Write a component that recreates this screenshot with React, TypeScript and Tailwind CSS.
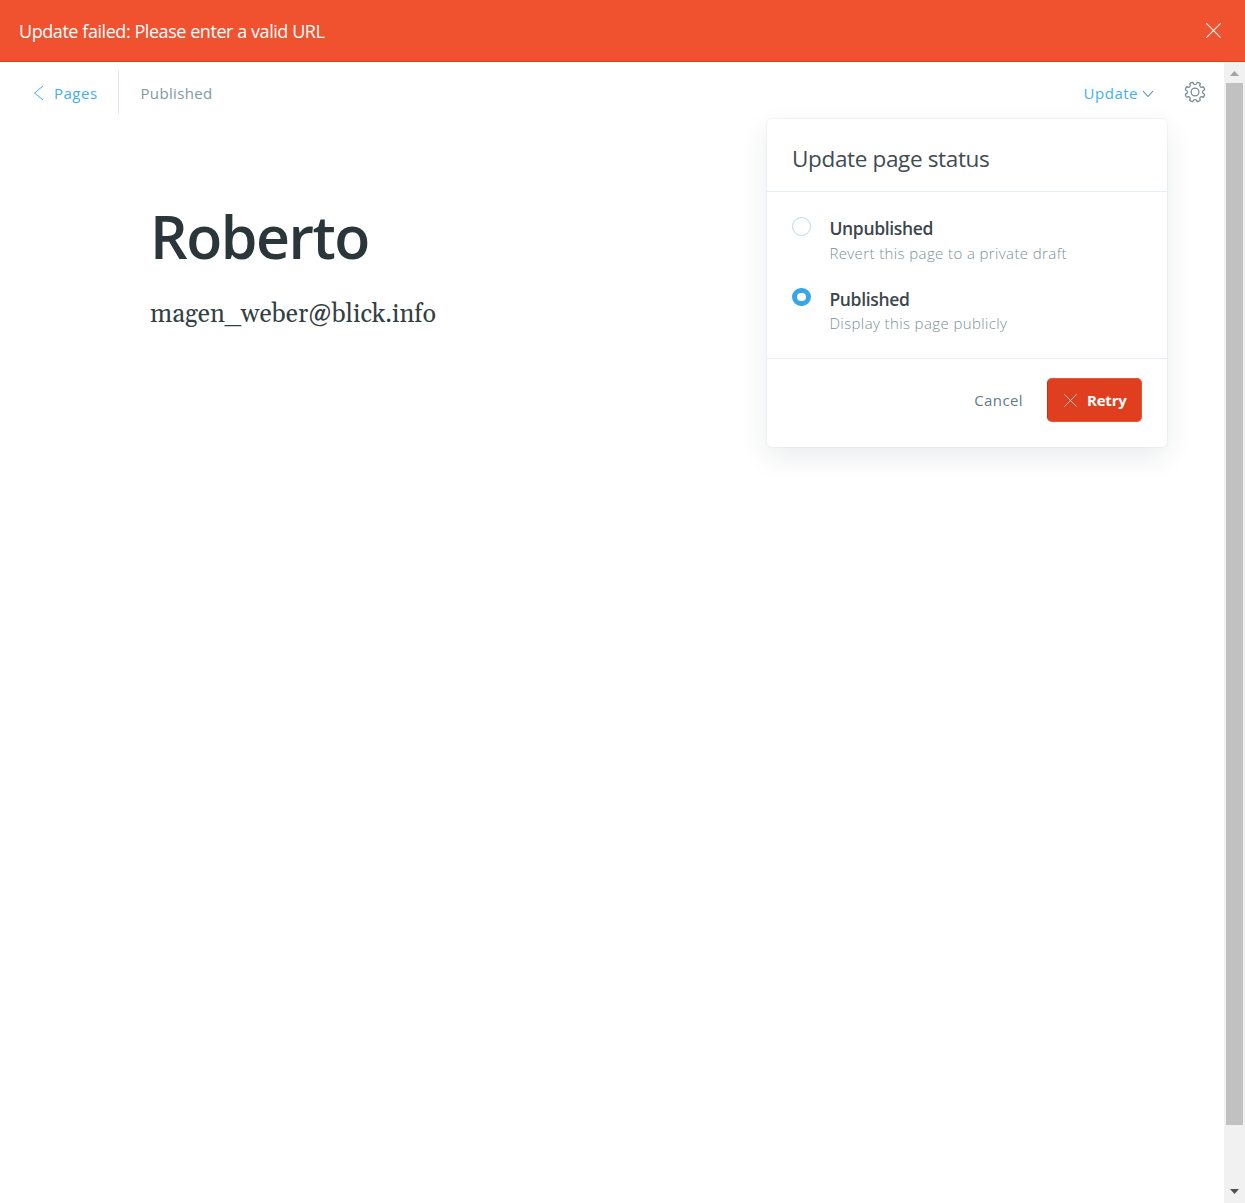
const ui = "font-['Open_Sans','Noto_Sans',sans-serif]";

function Cross({ size, className }: { size: number; className?: string }) {
  return (
    <svg width={size} height={size} viewBox="0 0 16 16" fill="none" stroke="currentColor" strokeWidth="1.1" strokeLinecap="round" className={className}>
      <path d="M.7.7l14.6 14.6M15.3.7L.7 15.3" />
    </svg>
  );
}

function Gear() {
  const teeth = [0, 45, 90, 135, 180, 225, 270, 315];
  return (
    <svg width="22" height="22" viewBox="-11 -11 22 22" fill="none" stroke="#738a94" strokeWidth="1.25" strokeLinecap="round" strokeLinejoin="round">
      <circle r="3.9" />
      {teeth.map((a) => (
        <path key={a} transform={`rotate(${a})`} d="M-2-9.2C-1.6-7.8-.9-7.5 0-7.5C.9-7.5 1.6-7.8 2-9.2Q2.3-9.8 3.1-9.5L4.5-8.9Q5.4-8.5 5.09-7.92" />
      ))}
    </svg>
  );
}

function Option({ title, note, checked, className }: { title: string; note: string; checked?: boolean; className?: string }) {
  return (
    <div className={`flex ${className ?? ""}`}>
      {checked ? (
        <span className="mt-[3px] h-[18px] w-[19px] shrink-0 rounded-full border-[5px] border-[#36a6e8] bg-white" />
      ) : (
        <span className="mt-[3px] h-[19px] w-[19px] shrink-0 rounded-full border border-[#bfd8e8] bg-white" />
      )}
      <div className="ml-[18.4px] whitespace-nowrap">
        <div className={`text-[17.5px] leading-[29px] font-semibold tracking-[-0.34px] text-[#3b474c] ${checked ? "h-[27px]" : "h-7"}`}>{title}</div>
        <div className="h-[22px] text-[15px] leading-[22px] font-light tracking-[0.39px] text-[#7d9099]">{note}</div>
      </div>
    </div>
  );
}

export default function App() {
  return (
    <div className={`flex h-[1203px] w-[1245px] flex-col overflow-hidden bg-white whitespace-nowrap ${ui}`}>
      <div className="flex h-[62px] shrink-0 items-center justify-between border-b border-[#e03c1c] bg-[#f05230] pr-6 pl-[19px] text-white">
        <span className="pt-px text-[18px] tracking-[-0.44px]">Update failed: Please enter a valid URL</span>
        <Cross size={15} />
      </div>
      <div className="flex min-h-0 flex-1">
        <main className="relative min-w-0 flex-1">
          <header className="flex h-[62px] items-center pr-[18px] pl-[33px] text-[15px] tracking-[0.5px]">
            <svg className="mb-px" width="11" height="16" viewBox="0 0 11 16" fill="none" stroke="#3eb0ef" strokeWidth="1">
              <path d="M10 1L1.5 8L10 15" />
            </svg>
            <span className="ml-[10px] w-16 text-[#3eb0ef]">Pages</span>
            <span className="mb-0.5 h-11 w-px bg-[#dfe9ef]" />
            <span className="ml-[21.5px] tracking-[0.35px] text-[#8399a3]">Published</span>
            <span className="ml-auto text-[#3eb0ef]">Update</span>
            <svg className="mt-0.5 ml-1" width="12" height="8" viewBox="0 0 12 8" fill="none" stroke="#4f8fb3" strokeWidth="1.1">
              <path d="M1 1L6 6.5L11 1" />
            </svg>
            <span className="mb-0.5 ml-[30px]"><Gear /></span>
          </header>
          <section className="pt-[72px] pl-[150px]">
            <h1 className="text-[59px] leading-[80px] font-semibold tracking-[-1.5px] text-[#2b363b]">Roberto</h1>
            <p className="mt-[21px] font-['Gelasio','Liberation_Serif',serif] text-[25.2px] leading-9 text-[#343f44]">magen_weber@blick.info</p>
          </section>
          <div className="absolute top-[57px] left-[767px] h-[328px] w-[400px] rounded-[5px] bg-white shadow-[0_0_0_1px_rgba(99,114,130,0.06),0_10px_28px_rgba(27,39,51,0.09)]">
            <div className="flex h-[73px] items-center border-b border-[#e5eff5] pt-2 pl-[25px] text-[22.5px] tracking-[-0.35px] text-[#414c51]">
              <span>Update page status</span>
            </div>
            <div className="h-[167px] border-b border-[#e5eff5] pt-[22px] pl-[25px]">
              <Option title="Unpublished" note="Revert this page to a private draft" />
              <Option title="Published" note="Display this page publicly" checked className="mt-[21px]" />
            </div>
            <div className="flex items-center justify-end pt-[19px] pr-[25px] text-[15px]">
              <span className="tracking-[0.4px] text-[#667b85]">Cancel</span>
              <div className="ml-6 flex h-11 w-[95px] items-center rounded-[5px] border border-[#ee5030] border-l-[#b93519] bg-[#df3f1e] pl-4 text-white">
                <Cross size={13} className="opacity-80" />
                <span className="ml-2.5 font-bold tracking-[-0.2px]">Retry</span>
              </div>
            </div>
          </div>
        </main>
        <div className="flex w-[21px] shrink-0 flex-col items-center bg-[#f1f1f1]">
          <svg className="mt-[9px]" width="9" height="5" viewBox="0 0 9 5"><path d="M4.5 0L9 5H0z" fill="#a3a3a3" /></svg>
          <div className="mt-[7px] h-[1042px] w-[17px] bg-[#c1c1c1]" />
          <svg className="mt-[64px]" width="9" height="5" viewBox="0 0 9 5"><path d="M0 0H9L4.5 5z" fill="#505050" /></svg>
        </div>
      </div>
    </div>
  );
}
